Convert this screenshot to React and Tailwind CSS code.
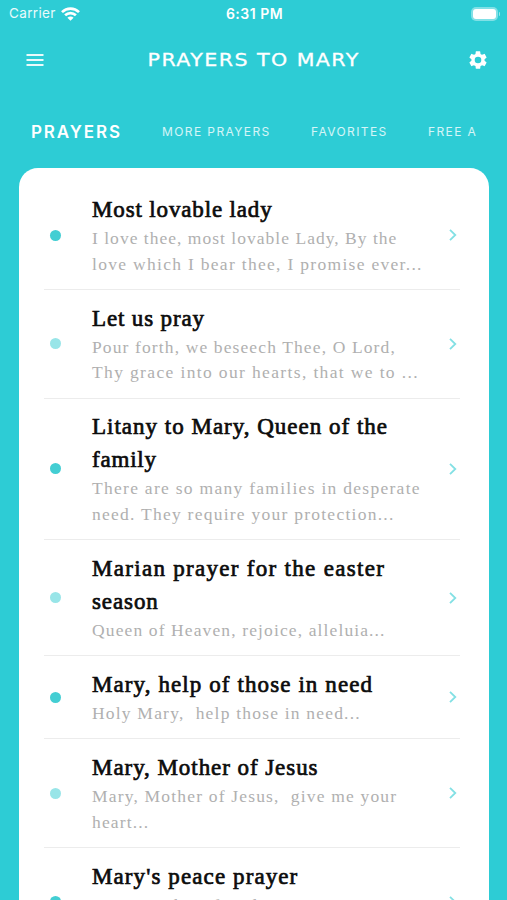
const PRAYERS = [
  {
    title: [['Most lovable lady', 'tracking-[0.85px]']],
    body: [
      ['I love thee, most lovable Lady, By the', 'tracking-[1.02px]'],
      ['love which I bear thee, I promise ever...', 'tracking-[1.3px]'],
    ],
  },
  {
    title: [['Let us pray', 'tracking-[0.85px]']],
    body: [
      ['Pour forth, we beseech Thee, O Lord,', 'tracking-[1.12px]'],
      ['Thy grace into our hearts, that we to ...', 'tracking-[1.36px]'],
    ],
  },
  {
    title: [
      ['Litany to Mary, Queen of the', 'tracking-[1px]'],
      ['family', 'tracking-[0.8px]'],
    ],
    body: [
      ['There are so many families in desperate', 'tracking-[1.28px]'],
      ['need. They require your protection...', 'tracking-[1.25px]'],
    ],
  },
  {
    title: [
      ['Marian prayer for the easter', 'tracking-[1.3px]'],
      ['season', 'tracking-[0.9px]'],
    ],
    body: [['Queen of Heaven, rejoice, alleluia...', 'tracking-[1.12px]']],
  },
  {
    title: [['Mary, help of those in need', 'tracking-[1.1px]']],
    body: [['Holy Mary,  help those in need...', 'tracking-[1.2px]']],
  },
  {
    title: [['Mary, Mother of Jesus', 'tracking-[0.94px]']],
    body: [
      ['Mary, Mother of Jesus,  give me your', 'tracking-[1.18px]'],
      ['heart...', 'tracking-[1.15px]'],
    ],
  },
  {
    title: [["Mary's peace prayer", 'tracking-[1.1px]']],
    body: [
      ['Mary, Mother of God, we trust in you. For', 'tracking-[0.8px]'],
      ['peace...', 'tracking-[1.1px]'],
    ],
  },
];

function StatusBar() {
  return (
    <div className="grid h-7 shrink-0 grid-cols-3 items-center pl-[9px] pr-[7px] text-[13.5px] leading-none text-white">
      <div className="flex items-center gap-[5px]">
        <span className="tracking-[0.35px] text-white/90">Carrier</span>
        <svg width="19" height="14" viewBox="0 0 19 14" fill="none" stroke="white" strokeWidth="2.7">
          <path d="M1 5.1C5.8 0.4 13.2 0.4 18 5.1" />
          <path d="M4.1 8.3C7.2 5.4 11.8 5.4 14.9 8.3" />
          <path d="M9.5 13.8L6.4 10.7C8.2 9.2 10.8 9.2 12.6 10.7Z" fill="white" stroke="none" />
        </svg>
      </div>
      <span className="text-center text-[14px] font-semibold tracking-[0.5px]">6:31 PM</span>
      <div className="flex items-center justify-end gap-px">
        <div className="h-[14px] w-[27px] rounded-[5px] bg-white/40 p-[2px]">
          <div className="h-full rounded-[3px] bg-white" />
        </div>
        <div className="h-1 w-[1.5px] rounded-r bg-white/50" />
      </div>
    </div>
  );
}

function Header() {
  return (
    <div className="flex h-[64px] shrink-0 items-center justify-between pl-[26px] pr-[18px]">
      <svg width="18" height="14" viewBox="0 0 18 14" stroke="white" strokeWidth="2" strokeOpacity="0.9">
        <path d="M0.5 2H17.5M0.5 7H17.5M0.5 12H17.5" />
      </svg>
      <h1 className="mr-[3px] scale-x-[1.21] font-['DejaVu_Sans'] text-[17px] leading-none tracking-[1.2px] text-white [-webkit-text-stroke:0.3px_white]">PRAYERS TO MARY</h1>
      <svg width="22" height="22" viewBox="0 0 24 24" fill="white">
        <path d="M19.14 12.94c.04-.3.06-.61.06-.94 0-.32-.02-.64-.07-.94l2.03-1.58a.49.49 0 0 0 .12-.61l-1.92-3.32a.49.49 0 0 0-.59-.22l-2.39.96c-.5-.38-1.03-.7-1.62-.94l-.36-2.54a.48.48 0 0 0-.48-.41h-3.84c-.24 0-.43.17-.47.41l-.36 2.54c-.59.24-1.13.57-1.62.94l-2.39-.96a.48.48 0 0 0-.59.22L2.74 8.87c-.12.21-.08.47.12.61l2.03 1.58c-.05.3-.09.63-.09.94s.02.64.07.94l-2.03 1.58a.49.49 0 0 0-.12.61l1.92 3.32c.12.22.37.29.59.22l2.39-.96c.5.38 1.03.7 1.62.94l.36 2.54c.05.24.24.41.48.41h3.84c.24 0 .44-.17.47-.41l.36-2.54c.59-.24 1.13-.56 1.62-.94l2.39.96c.22.08.47 0 .59-.22l1.92-3.32a.49.49 0 0 0-.12-.61l-2.01-1.58zM12 15.6A3.6 3.6 0 1 1 12 8.4a3.6 3.6 0 0 1 0 7.2z" />
      </svg>
    </div>
  );
}

function Tabs() {
  return (
    <nav className="flex h-[76px] shrink-0 items-center whitespace-nowrap pl-[31px] pt-[4px] text-[12px] leading-none tracking-[1.4px] text-white/80">
      <span className="w-[131px] text-[17px] font-semibold tracking-[1.9px] text-white">PRAYERS</span>
      <span className="w-[149px]">MORE PRAYERS</span>
      <span className="w-[117px]">FAVORITES</span>
      <span>FREE A</span>
    </nav>
  );
}

function PrayerRow({ prayer, dim }) {
  return (
    <li className="flex items-center border-b border-[#ececec] pb-[11.8px] pt-[11.8px]">
      <span className={`ml-[6px] h-[11px] w-[11px] shrink-0 rounded-full ${dim ? 'bg-[#98e5e8]' : 'bg-[#43ced3]'}`} />
      <div className="ml-[31px] min-w-0 flex-1 whitespace-pre font-['Liberation_Serif']">
        {prayer.title.map(([line, tracking]) => (
          <p key={line} className={`h-[33px] text-[23px] leading-[33px] text-[#0c0c0c] [-webkit-text-stroke:0.7px_#0c0c0c] ${tracking}`}>{line}</p>
        ))}
        {prayer.body.map(([line, tracking]) => (
          <p key={line} className={`h-[25.5px] text-[17.5px] leading-[25.5px] text-[#b0b0b0] ${tracking}`}>{line}</p>
        ))}
      </div>
      <svg className="mr-[3px] shrink-0" width="8" height="12" viewBox="0 0 8 12" fill="none" stroke="#83e0e4" strokeWidth="1.8">
        <path d="M1 0.8L6.3 6L1 11.2" />
      </svg>
    </li>
  );
}

export default function App() {
  return (
    <div className="flex h-[900px] w-[507px] flex-col overflow-hidden bg-[#2dccd5] font-[Inter]">
      <StatusBar />
      <Header />
      <Tabs />
      <main className="ml-[19px] mr-[18px] min-h-0 flex-1 overflow-hidden rounded-t-[19px] bg-white pl-[25px] pr-[29px] pt-[13.4px]">
        <ul>
          {PRAYERS.map((prayer, i) => (
            <PrayerRow key={prayer.title[0][0]} prayer={prayer} dim={i % 2 === 1} />
          ))}
        </ul>
      </main>
    </div>
  );
}
